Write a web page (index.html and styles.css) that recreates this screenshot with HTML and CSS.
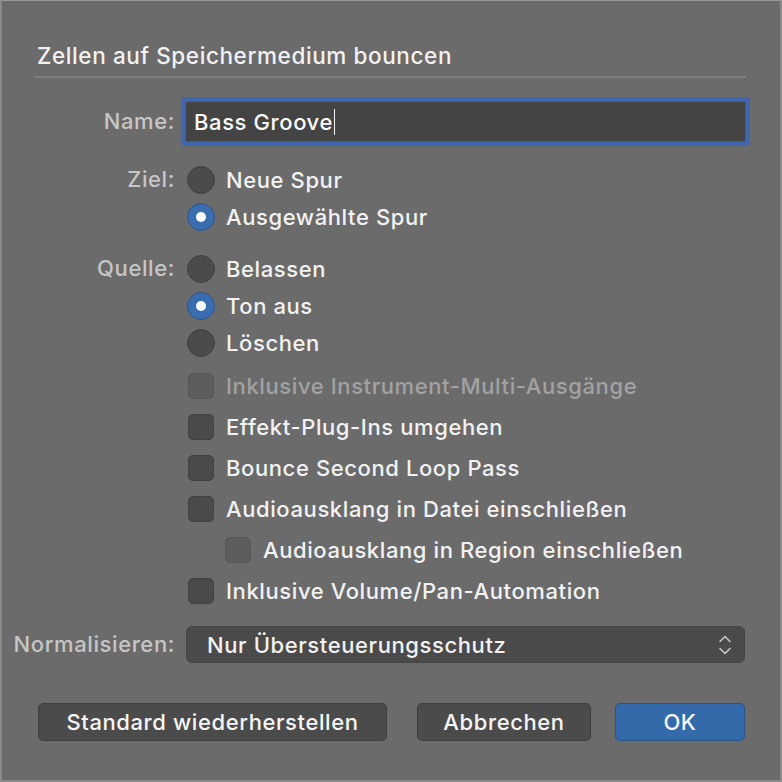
FILE: index.html
```html
<!DOCTYPE html>
<html lang="de">
<head>
<meta charset="utf-8">
<link rel="stylesheet" href="styles.css">
</head>
<body>
<div class="dialog">
  <div class="title">Zellen auf Speichermedium bouncen</div>
  <div class="sep"></div>

  <div class="form">
    <div class="label name-label">Name:</div>
    <div class="field"><span class="field-text">Bass Groove</span><span class="caret"></span></div>

    <div class="label group-label ziel">Ziel:</div>
    <div class="group ziel-group">
      <div class="row radio-row"><span class="radio"></span><span class="txt">Neue Spur</span></div>
      <div class="row radio-row"><span class="radio on"></span><span class="txt">Ausgewählte Spur</span></div>
    </div>

    <div class="label group-label quelle">Quelle:</div>
    <div class="group quelle-group">
      <div class="row radio-row"><span class="radio"></span><span class="txt">Belassen</span></div>
      <div class="row radio-row"><span class="radio on"></span><span class="txt">Ton aus</span></div>
      <div class="row radio-row"><span class="radio"></span><span class="txt">Löschen</span></div>
      <div class="row check-row disabled first-check"><span class="check"></span><span class="txt">Inklusive Instrument-Multi-Ausgänge</span></div>
      <div class="row check-row"><span class="check"></span><span class="txt">Effekt-Plug-Ins umgehen</span></div>
      <div class="row check-row"><span class="check"></span><span class="txt">Bounce Second Loop Pass</span></div>
      <div class="row check-row"><span class="check"></span><span class="txt">Audioausklang in Datei einschließen</span></div>
      <div class="row check-row indent disabled-box"><span class="check"></span><span class="txt">Audioausklang in Region einschließen</span></div>
      <div class="row check-row"><span class="check"></span><span class="txt">Inklusive Volume/Pan-Automation</span></div>
    </div>

    <div class="label norm-label">Normalisieren:</div>
    <div class="popup">
      <span class="popup-text">Nur Übersteuerungsschutz</span>
      <svg class="chev" width="14" height="24" viewBox="0 0 14 24"><path d="M2 8.5 L7 3.5 L12 8.5" fill="none" stroke="#c8c8c8" stroke-width="1.6" stroke-linecap="round" stroke-linejoin="round"/><path d="M2 15.5 L7 20.5 L12 15.5" fill="none" stroke="#c8c8c8" stroke-width="1.6" stroke-linecap="round" stroke-linejoin="round"/></svg>
    </div>
  </div>

  <div class="buttons">
    <div class="btn btn-std">Standard wiederherstellen</div>
    <div class="spacer"></div>
    <div class="btn btn-cancel">Abbrechen</div>
    <div class="btn btn-ok">OK</div>
  </div>
</div>
</body>
</html>
```

FILE: styles.css
```css
html, body {
  margin: 0;
  padding: 0;
  background: #6b6b6b;
}
body {
  font-family: Inter, "Noto Sans", "Liberation Sans", sans-serif;
  color: #f2f2f2;
  font-size: 22px;
  font-weight: 500;
  letter-spacing: 0.6px;
}
.dialog {
  width: 782px;
  height: 782px;
  box-sizing: border-box;
  background: #6b6b6b;
  border-top: 1px solid #9a9a9a;
  border-left: 2px solid #8a8a8a;
  border-right: 2px solid #8a8a8a;
  border-bottom: 2px solid #8a8a8a;
  position: relative;
}
.title {
  padding-left: 35px;
  padding-top: 39px;
  line-height: 32px;
  height: 32px;
  font-size: 22.5px;
  color: #f2f2f2;
}
.sep {
  margin: 4px 34px 0 33px;
  height: 2px;
  background: #7f7f7f;
}
.form {
  display: grid;
  grid-template-columns: 173px 1fr;
  column-gap: 11px;
  margin-top: 24px;
  margin-right: 35px;
}
.label {
  text-align: right;
  color: #c6c6c6;
  line-height: 37px;
  height: 37px;
  white-space: nowrap;
}
.name-label {
  line-height: 39px;
  height: 39px;
}
.field {
  height: 39px;
  background: #444444;
  box-shadow: 0 0 0 1px #3d5f9e, 0 0 0 5px #3f66ae;
  border-radius: 1px;
  display: flex;
  align-items: center;
  padding-left: 8px;
  color: #fafafa;
}
.caret {
  display: inline-block;
  width: 1.5px;
  height: 26px;
  background: #f5f5f5;
  margin-left: 1px;
}
.ziel, .ziel-group { margin-top: 20px; }
.quelle, .quelle-group { margin-top: 15px; }
.group {
  display: flex;
  flex-direction: column;
}
.row {
  display: flex;
  align-items: center;
  white-space: nowrap;
}
.radio-row { height: 37px; }
.check-row { height: 41px; }
.first-check { margin-top: 4px; }
.radio {
  width: 26px;
  height: 26px;
  border-radius: 50%;
  background: #4b4b4b;
  border: 1px solid #404040;
  margin-left: 1px;
  margin-right: 11px;
  position: relative;
  flex: none;
}
.radio.on {
  background: #3a6cb0;
  border-color: #2e568f;
}
.radio.on::after {
  content: "";
  position: absolute;
  left: 8px;
  top: 8px;
  width: 10px;
  height: 10px;
  border-radius: 50%;
  background: #ffffff;
}
.check {
  width: 24px;
  height: 24px;
  border-radius: 5px;
  background: #4a4a4a;
  border: 1px solid #414141;
  margin-left: 2px;
  margin-right: 12px;
  flex: none;
}
.check-row.disabled .check,
.check-row.disabled-box .check {
  background: #5d5d5d;
  border-color: #575757;
}
.check-row.disabled .txt { color: #a2a2a2; }
.indent { padding-left: 37px; }
.norm-label {
  margin-top: 15px;
  margin-left: -170px;
}
.popup {
  margin-top: 15px;
  height: 37px;
  background: #4a4a4a;
  border: 1px solid #444;
  box-sizing: border-box;
  border-radius: 6px;
  display: flex;
  align-items: center;
  padding-left: 20px;
  padding-right: 12px;
}
.popup-text { flex: 1; }
.chev { flex: none; }
.buttons {
  display: flex;
  margin: 40px 35px 0 36px;
  gap: 24px;
}
.spacer { flex: 1; margin-left: -24px; }
.btn {
  height: 38px;
  box-sizing: border-box;
  border-radius: 5px;
  background: #4b4b4b;
  border: 1px solid #3f3f3f;
  display: flex;
  align-items: center;
  justify-content: center;
  color: #f5f5f5;
}
.btn-std { width: 349px; }
.btn-cancel { width: 174px; }
.btn-ok {
  width: 130px;
  background: #3469aa;
  border-color: #2b5488;
}
```
